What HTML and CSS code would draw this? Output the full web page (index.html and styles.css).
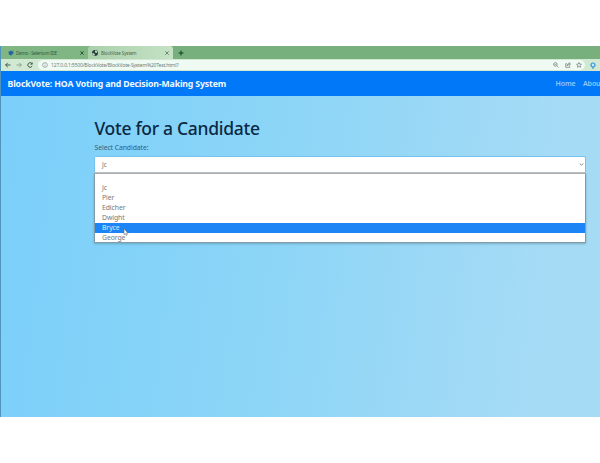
FILE: index.html
```html
<!DOCTYPE html>
<html lang="en">
<head>
<meta charset="utf-8">
<title>BlockVote System</title>
<link rel="stylesheet" href="styles.css">
</head>
<body>
<div class="screen">
  <div class="tabs">
    <div class="tab">
      <svg class="favicon" viewBox="0 0 8 8"><path d="M4 1.200 6.800 4 4 6.800 1.200 4Z" fill="#246da5"/><path d="M1.500 2.800 4 4 2 5.800M4 4l2.500-2" stroke="#285891" fill="none"/></svg>
      <span class="tab-title first-title">Demo - Selenium IDE</span>
      <svg class="close" viewBox="0 0 6 6"><path d="m1.3 1.3 3.4 3.4m0-3.4L1.3 4.7"/></svg>
    </div>
    <div class="tab active">
      <svg class="favicon" viewBox="0 0 8 8"><circle cx="4" cy="4" r="3" fill="#263f3c"/><path d="M4.5 1.3 6.6 2.8 5.4 4 3.8 3.3ZM1.2 4l2 .5.8 1.8-1 .5-1.5-1Z" fill="#c9e4c8"/></svg>
      <span class="tab-title">BlockVote System</span>
      <svg class="close faint" viewBox="0 0 6 6"><path d="m1.3 1.3 3.4 3.4m0-3.4L1.3 4.7"/></svg>
    </div>
    <svg class="plus" viewBox="0 0 6 6"><path d="M3 .5v5M.5 3h5"/></svg>
  </div>
  <div class="toolbar">
    <svg class="nav-icon" viewBox="0 0 6 6"><path d="M5.5 3H.7M2.8.8.6 3l2.2 2.2"/></svg>
    <svg class="nav-icon muted" viewBox="0 0 6 6"><path d="M.5 3h4.8M3.2.8 5.4 3 3.2 5.2"/></svg>
    <svg class="nav-icon" viewBox="0 0 6 6"><path d="M5 1.6A2.3 2.3 0 1 0 5.2 4M5.2.5v1.7H3.5"/></svg>
    <div class="address">
      <svg class="info" viewBox="0 0 6 6"><circle cx="3" cy="3" r="2.4"/><path d="M3 2.7v1.6M3 1.5v.5"/></svg>
      <span class="url">127.0.0.1:5500/BlockVote/BlockVote-System%20Test.html?</span>
      <svg class="action" viewBox="0 0 6 6"><circle cx="2.4" cy="2.4" r="1.8"/><path d="m3.8 3.8 1.7 1.7M1.5 2.4h1.8"/></svg>
      <svg class="action" viewBox="0 0 6 6"><path d="M2 1.7H.7v3.7h4V4M2 4c.1-1.6 1-2.4 2.3-2.4V.6l1.2 1.5-1.2 1.4v-1C3.200 2.500 2.500 3 2 4Z"/></svg>
      <svg class="action" viewBox="0 0 6 6"><path d="m3 .5.7 1.6 1.800.2-1.300 1.200.4 1.800L3 4.400l-1.600.9.4-1.800L.5 2.300l1.800-.2Z"/></svg>
    </div>
    <svg class="extension" viewBox="0 0 6 7"><circle cx="3" cy="3" r="2" fill="#c6eafb" stroke="#3295d3" stroke-width="1.200"/><path d="M2 5.500h2v1H2Z" fill="#3d89bb"/></svg>
  </div>
  <nav class="navbar">
    <span class="brand">BlockVote: HOA Voting and Decision-Making System</span>
    <span class="link home">Home</span>
    <span class="link">About</span>
  </nav>
  <main class="content">
    <h1>Vote for a Candidate</h1>
    <div class="label">Select Candidate:</div>
    <div class="select">
      <span>Jc</span>
      <svg class="chevron" viewBox="0 0 5 5"><path d="m.8 1.500 1.700 1.700 1.700-1.700"/></svg>
    </div>
    <div class="options">
      <div class="option"></div>
      <div class="option">Jc</div>
      <div class="option">Pier</div>
      <div class="option">Edicher</div>
      <div class="option">Dwight</div>
      <div class="option selected">Bryce</div>
      <div class="option">George</div>
    </div>
  </main>
  <svg class="cursor" viewBox="0 0 6 9"><path d="M1 .7v6l1.300-1.200.9 2 1-.5-.9-1.800H5Z" fill="#fff" stroke="#64717b" stroke-width=".6"/></svg>
</div>
</body>
</html>
```

FILE: styles.css
```css
* { box-sizing: border-box; }
body {
  margin: 0;
  padding-top: 46px;
  height: 463px;
  overflow: hidden;
  background: #fff;
  font-family: "Noto Sans", "Open Sans", sans-serif;
}
.screen {
  position: relative;
  display: flex;
  flex-direction: column;
  width: 600px;
  height: 371px;
  overflow: hidden;
  border-left: 1px solid #5093bd;
  background: linear-gradient(97deg, #7acffa, #8cd5f7 45%, #a6dbf5 90%);
}
svg { fill: none; stroke-width: .8; flex: none; }
.tabs {
  display: flex;
  align-items: center;
  height: 13px;
  background: #77b07d;
}
.tab {
  display: flex;
  align-items: center;
  width: 87px;
  height: 13px;
  padding-left: 6px;
  background: #80b584;
}
.active { width: 85px; padding-left: 3px; background: linear-gradient(90deg, #a9d0aa, #c5e2c5); border-radius: 3px 3px 0 0; }
.favicon { width: 8px; height: 8px; }
.tab-title { width: 62px; margin-left: 2px; font-size: 4.500px; line-height: 8px; letter-spacing: -.12px; white-space: nowrap; color: #4c6850; }
.first-title { width: 61px; margin-left: 1px; margin-right: -1px; letter-spacing: -.2px; color: #305d3e; }
.close { width: 6px; height: 6px; margin-left: 3px; stroke: #153f23; }
.faint { margin-left: 1px; stroke: #54755a; }
.plus { width: 6px; height: 6px; margin-left: 4.500px; stroke: #123d20; stroke-width: 1; }
.toolbar {
  display: flex;
  align-items: center;
  height: 12px;
  padding-left: 4px;
  background: #d1e8d2;
}
.nav-icon { width: 6px; height: 6px; margin-right: 5px; stroke: #213a2b; }
.muted { stroke: #809585; }
.address {
  display: flex;
  align-items: center;
  width: 547px;
  height: 10px;
  padding-left: 4px;
  border-radius: 5px;
  background: #effaf3;
}
.info { width: 6px; height: 6px; stroke: #73847b; stroke-width: .6; }
.url { flex: 1; margin-left: 3px; font-size: 5px; line-height: 8px; letter-spacing: -.165px; color: #707f78; }
.action { width: 6px; height: 6px; margin-right: 5.500px; stroke: #65746c; stroke-width: .65; }
.action:last-child { margin-right: 3px; }
.extension { width: 6px; height: 7px; margin-left: 5px; }
.navbar {
  display: flex;
  align-items: center;
  height: 25px;
  padding-left: 6.500px;
  background: #0078f8;
  white-space: nowrap;
}
.brand { width: 548px; font-size: 8.700px; font-weight: 700; letter-spacing: -.13px; color: #f3faff; }
.link { font-size: 7px; font-weight: 600; letter-spacing: -.1px; color: #92c9fb; }
.home { width: 27.500px; }
.brand + .home { flex: none; }
.brand { flex: none; }
.content { width: 492px; margin-left: 93px; padding-top: 20px; }
h1 { margin: 0 0 1px .5px; height: 24px; font-size: 17.500px; font-weight: 500; line-height: 24px; letter-spacing: -.3px; white-space: nowrap; color: #0b2944; }
.label { height: 15px; padding-left: .5px; font-size: 6.800px; line-height: 13px; letter-spacing: -.06px; color: #335d78; }
.select {
  display: flex;
  align-items: center;
  justify-content: space-between;
  height: 17px;
  padding: 0 1px 0 7px;
  border: 1px solid #75c2ef;
  border-bottom-color: #bfc5c8;
  border-radius: 2px 2px 0 0;
  background: #fff;
  color: #727678;
  font-size: 6.500px;
}
.chevron { width: 5px; height: 5px; stroke: #56636a; }
.options {
  height: 70px;
  border: 1px solid #839caa;
  border-top-color: #aaadae;
  background: #fff;
  box-shadow: 0 1px 2px #55819b88;
}
.option { height: 10px; padding-left: 7px; font-size: 6.800px; line-height: 9px; letter-spacing: -.05px; color: #72777b; }
.option:first-child { height: 9px; }
.selected { background: #1c84f4; color: #d7eeff; }
.cursor { position: absolute; left: 122px; top: 182px; width: 6px; height: 9px; }
```
